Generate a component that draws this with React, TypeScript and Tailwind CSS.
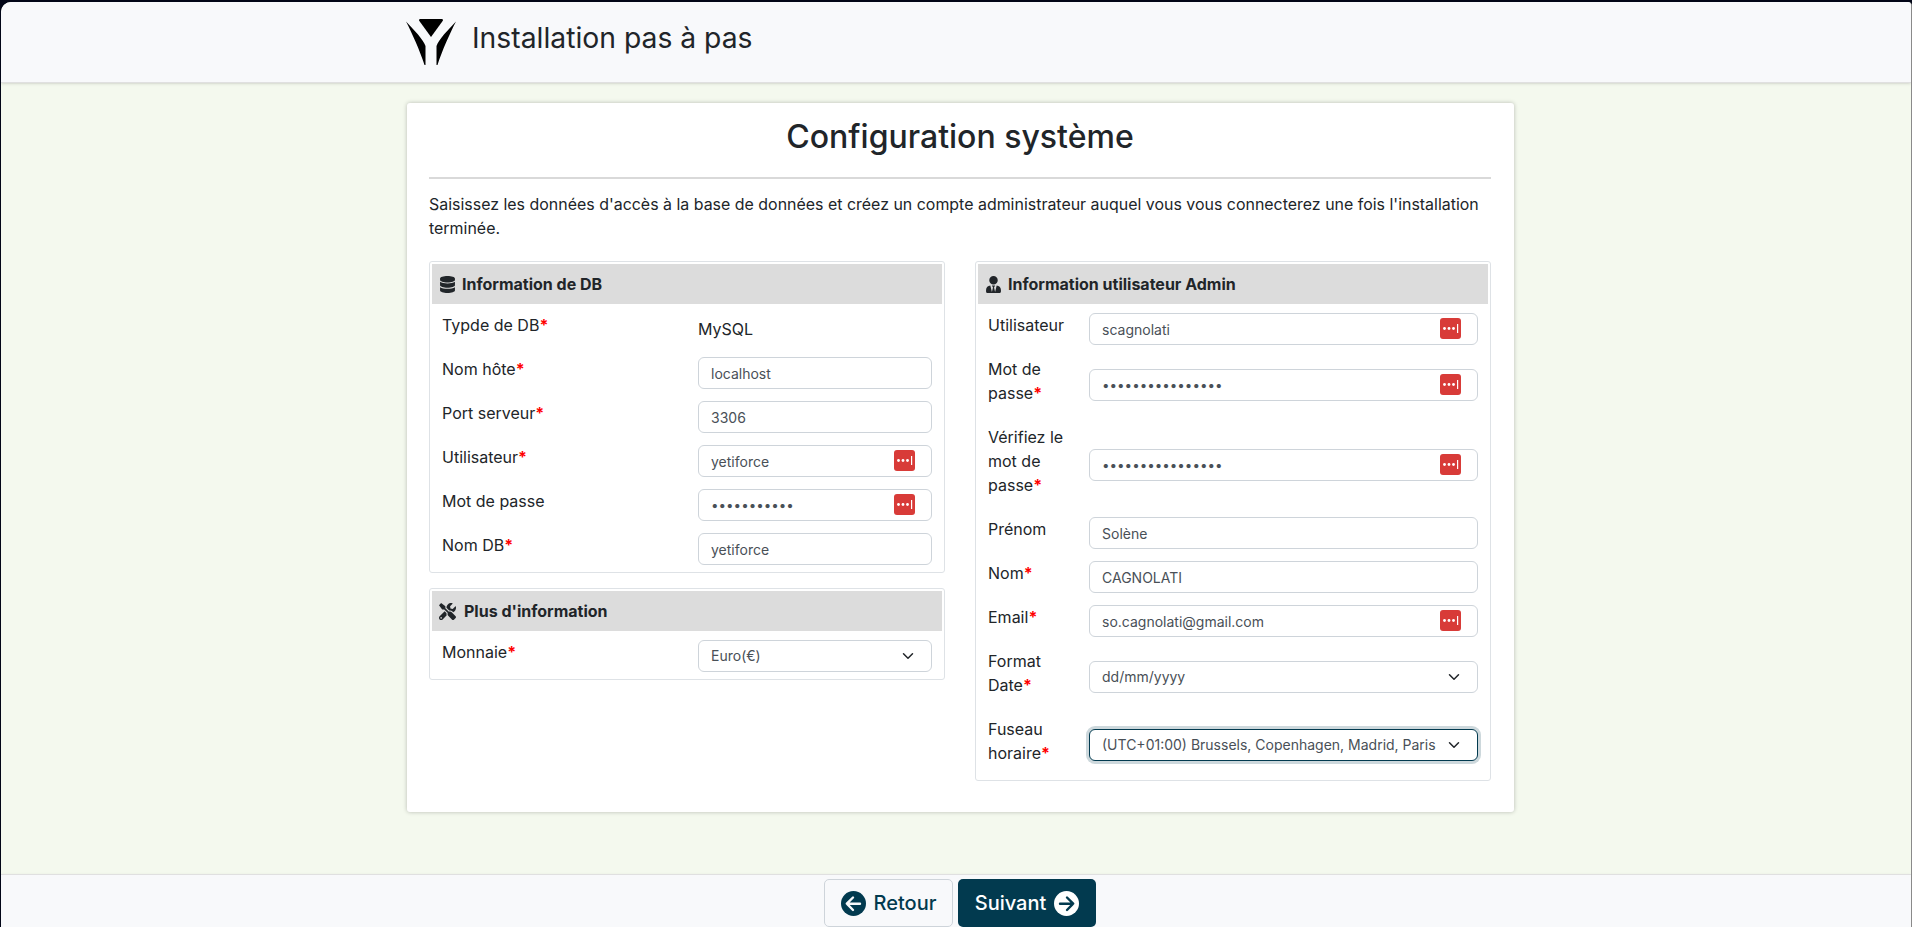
import type { ReactNode } from "react";
import { FaDatabase, FaTools, FaUserTie } from "react-icons/fa";

function Logo() {
  return (
    <svg width="50" height="46" viewBox="0 0 50 46" className="mt-1 shrink-0">
      <path d="M13.5 0H36.5L37 1.5L25 18L13 1.5Z" fill="#000" />
      <path d="M0 2.5C8 11 17 20 19.5 27L19.5 46H18.5C14 32 6 14 0 2.5Z" fill="#000" />
      <path d="M50 2.5C42 11 33 20 30.5 27L30.5 46H31.5C36 32 44 14 50 2.5Z" fill="#000" />
    </svg>
  );
}

function PassIcon() {
  return (
    <svg width="21" height="21" viewBox="0 0 21 21" className="absolute right-[17px] top-[5px]">
      <rect width="21" height="21" rx="3" fill="#d83b38" />
      <circle cx="4.5" cy="10.5" r="1.4" fill="#fff" />
      <circle cx="9" cy="10.5" r="1.4" fill="#fff" />
      <circle cx="13.5" cy="10.5" r="1.4" fill="#fff" />
      <rect x="17" y="6" width="1.2" height="9" fill="#fff" />
    </svg>
  );
}

function Chevron() {
  return (
    <svg width="12" height="12" viewBox="0 0 16 16" className="absolute right-[18px] top-[10px]">
      <path d="M2 5l6 6 6-6" fill="none" stroke="#212529" strokeWidth="2" strokeLinecap="round" strokeLinejoin="round" />
    </svg>
  );
}

// filled circle with a line arrow cut out of it
function CircleArrow({ fill, stroke, right }: { fill: string; stroke: string; right?: boolean }) {
  return (
    <svg width="25" height="25" viewBox="0 0 25 25" className="shrink-0">
      <circle cx="12.5" cy="12.5" r="12.5" fill={fill} />
      <path
        d={right ? "M6 12.7H19M13 6.5L19.2 12.7L13 19" : "M19 12.7H6M12 6.5L5.8 12.7L12 19"}
        fill="none"
        stroke={stroke}
        strokeWidth="2.4"
        strokeLinecap="round"
        strokeLinejoin="round"
      />
    </svg>
  );
}

function Req() {
  return <span className="text-[#ff0000] font-bold">*</span>;
}

function Row({
  label,
  required,
  labelW,
  children,
  last,
}: {
  label: string;
  required?: boolean;
  labelW: string;
  children: ReactNode;
  last?: boolean;
}) {
  return (
    <div className={`flex items-center ${last ? "" : "mb-3"}`}>
      <label className={`${labelW} shrink-0 self-start pb-2 pr-3 text-base leading-6 text-[#212529]`}>
        {label}
        {required && <Req />}
      </label>
      <div className="relative flex-1">{children}</div>
    </div>
  );
}

function TextField({ value, type = "text", pass }: { value: string; type?: string; pass?: boolean }) {
  return (
    <>
      <input
        readOnly
        type={type}
        value={value}
        className={`block h-8 w-full rounded-[6px] border border-[#ced4da] bg-white px-3 text-[#495057] outline-none ${
          type === "password" ? "text-[13.4px]" : "text-sm"
        }`}
      />
      {pass && <PassIcon />}
    </>
  );
}

function SelectField({ value, focused }: { value: string; focused?: boolean }) {
  return (
    <>
      <select
        defaultValue={value}
        className={`block h-8 w-full appearance-none rounded-[6px] border bg-white pl-3 pr-9 text-sm text-[#495057] outline-none ${
          focused ? "border-[#023a4f] shadow-[0_0_0_3px_#cdd8dc]" : "border-[#ced4da]"
        }`}
      >
        <option>{value}</option>
      </select>
      <Chevron />
    </>
  );
}

function Fieldset({
  icon,
  title,
  children,
  className = "",
}: {
  icon: ReactNode;
  title: string;
  children: ReactNode;
  className?: string;
}) {
  return (
    <fieldset className={`rounded-[3px] border border-[#dee2e6] p-[2px] pb-[7px] ${className}`}>
      <div className="flex h-10 items-center gap-[6px] bg-[#dcdcdc] px-[7px] text-base font-bold text-[#212529]">
        {icon}
        {title}
      </div>
      <div className="pl-[10px] pr-[10px] pt-[9px]">{children}</div>
    </fieldset>
  );
}

export default function App() {
  const leftW = "w-[256px]";
  const rightW = "w-[101px]";
  return (
    <div className="h-[927px] overflow-hidden bg-[#020617] pl-px pt-[2px] font-['Inter',sans-serif]">
      <div className="flex h-[925px] flex-col overflow-hidden rounded-tl-[10px] rounded-tr-[4px] border-r border-[#8a8a8a] bg-[#f4f9ee]">
        {/* Header */}
        <header className="flex h-[81px] shrink-0 items-center border-b border-[#e0e0e0] bg-[#f8f9fb] pb-[4px] pl-[405px] shadow-sm">
          <Logo />
          <h1 className="mb-1 ml-4 text-[28.3px] leading-9 text-[#212529]">Installation pas à pas</h1>
        </header>

        {/* Main */}
        <main className="flex-1 pl-[406px] pt-[20px]">
          <div className="w-[1107px] rounded-[3px] bg-white pb-[31px] pl-[22px] pr-[23px] shadow-[0_0_4px_rgba(0,0,0,0.25)]">
            <h2 className="pt-[10px] text-center text-[32px] font-medium leading-[48px] text-[#212529]">
              Configuration système
            </h2>
            <hr className="mt-[16px] border-t-2 border-[#d9d9d9]" />
            <p className="mt-[14px] text-[15.95px] leading-6 text-[#212529]">
              Saisissez les données d'accès à la base de données et créez un compte administrateur auquel vous vous
              connecterez une fois l'installation terminée.
            </p>
            <div className="mt-[20px] grid grid-cols-2 gap-x-[30px]">
              <div>
                <Fieldset icon={<FaDatabase size={17} />} title="Information de DB">
                  <Row label="Typde de DB" required labelW={leftW}>
                    <div className="flex h-8 items-center text-base text-[#212529]">MySQL</div>
                  </Row>
                  <Row label="Nom hôte" required labelW={leftW}>
                    <TextField value="localhost" />
                  </Row>
                  <Row label="Port serveur" required labelW={leftW}>
                    <TextField value="3306" />
                  </Row>
                  <Row label="Utilisateur" required labelW={leftW}>
                    <TextField value="yetiforce" pass />
                  </Row>
                  <Row label="Mot de passe" labelW={leftW}>
                    <TextField value="yetiforce12" type="password" pass />
                  </Row>
                  <Row label="Nom DB" required labelW={leftW} last>
                    <TextField value="yetiforce" />
                  </Row>
                </Fieldset>
                <Fieldset icon={<FaTools size={17} className="mr-[2px]" />} title="Plus d'information" className="mt-[15px]">
                  <Row label="Monnaie" required labelW={leftW} last>
                    <SelectField value="Euro(€)" />
                  </Row>
                </Fieldset>
              </div>
              <Fieldset icon={<FaUserTie size={17} />} title="Information utilisateur Admin" className="self-start">
                <Row label="Utilisateur" labelW={rightW}>
                  <TextField value="scagnolati" pass />
                </Row>
                <Row label="Mot de passe" required labelW={rightW}>
                  <TextField value="scagnolati123456" type="password" pass />
                </Row>
                <Row label="Vérifiez le mot de passe" required labelW={rightW}>
                  <TextField value="scagnolati123456" type="password" pass />
                </Row>
                <Row label="Prénom" labelW={rightW}>
                  <TextField value="Solène" />
                </Row>
                <Row label="Nom" required labelW={rightW}>
                  <TextField value="CAGNOLATI" />
                </Row>
                <Row label="Email" required labelW={rightW}>
                  <TextField value="so.cagnolati@gmail.com" pass />
                </Row>
                <Row label="Format Date" required labelW={rightW}>
                  <SelectField value="dd/mm/yyyy" />
                </Row>
                <Row label="Fuseau horaire" required labelW={rightW} last>
                  <SelectField value="(UTC+01:00) Brussels, Copenhagen, Madrid, Paris" focused />
                </Row>
              </Fieldset>
            </div>
          </div>
        </main>

        {/* Footer */}
        <footer className="flex h-[53px] shrink-0 justify-center gap-[5px] border-t border-[#e0e0e0] bg-[#f8f9fb] pl-2 pt-[4px] shadow-sm">
          <button className="flex h-12 w-[129px] items-center justify-center gap-2 rounded-[5px] border border-[#ced4da] bg-[#f8f9fb] text-xl font-medium text-[#023a4f]">
            <CircleArrow fill="#023a4f" stroke="#f8f9fb" />
            Retour
          </button>
          <button className="flex h-12 w-[138px] items-center justify-center gap-2 rounded-[5px] bg-[#023a4f] text-xl font-medium text-white">
            Suivant
            <CircleArrow fill="#ffffff" stroke="#023a4f" right />
          </button>
        </footer>
      </div>
    </div>
  );
}
